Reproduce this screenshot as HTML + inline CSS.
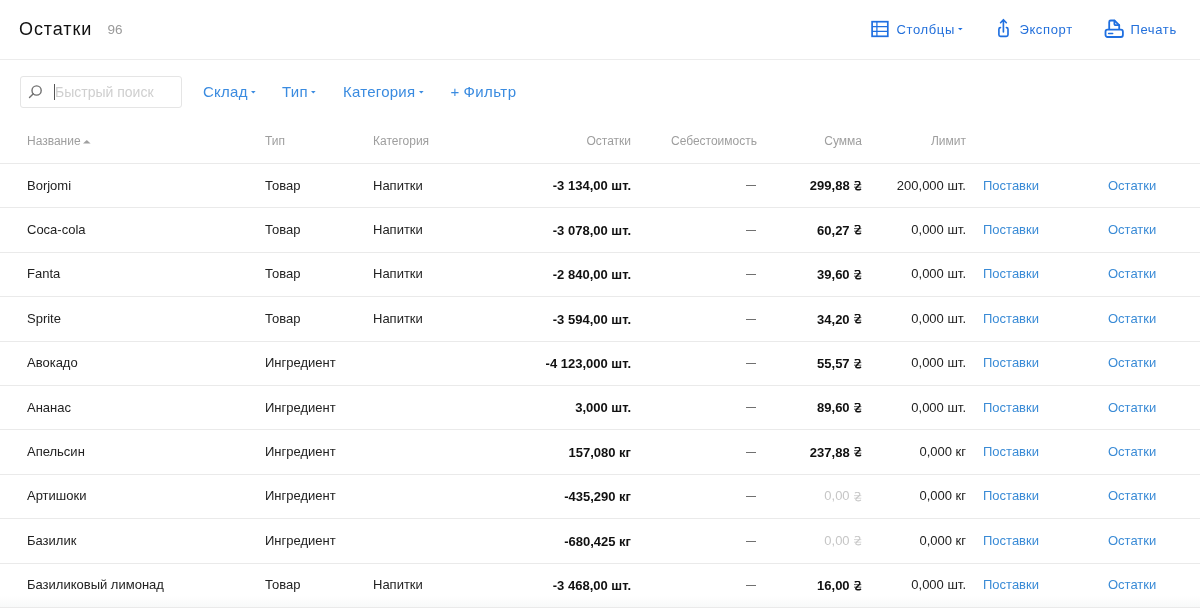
<!DOCTYPE html>
<html><head><meta charset="utf-8"><style>
*{box-sizing:border-box;margin:0;padding:0}
html,body{will-change:transform;width:1200px;height:608px;overflow:hidden;background:#fff;font-family:"Liberation Sans",sans-serif;color:#222}
.top{position:absolute;left:0;top:0;width:1200px;height:60px;border-bottom:1px solid #ececec}
.title{position:absolute;left:19px;top:18.5px;font-size:18px;color:#111;letter-spacing:0.9px}
.count{position:absolute;left:107.6px;top:21.6px;font-size:13.5px;color:#9a9a9a}
.act{position:absolute;top:21.6px;font-size:13px;color:#2370db;letter-spacing:0.65px;white-space:nowrap}
.search{position:absolute;left:20px;top:76px;width:162px;height:32px;border:1px solid #e5e5e5;border-radius:3px}
.search .ph{position:absolute;left:34px;top:7px;font-size:14px;color:#cfcfcf}
.search .cur{position:absolute;left:33px;top:7px;width:1.3px;height:15.5px;background:#555}
.flt{position:absolute;top:82.6px;font-size:15px;color:#3a8be0;letter-spacing:0.25px}
.cr{position:absolute}
.th{position:absolute;top:134px;font-size:12px;color:#9e9e9e;white-space:nowrap}
.hline{position:absolute;left:0;width:1200px;height:1px;background:#eaeaea}
.c{position:absolute;font-size:13px;color:#222;white-space:nowrap}
.r{text-align:right}
.dash{position:absolute;left:746.2px;width:9.6px;height:1.25px;background:#707070}
.b{font-weight:bold;color:#111}
.lnk{color:#3a8bd6}
.mut{color:#c6c6c6}
</style></head><body>
<div class="top"></div>
<div class="title">Остатки</div>
<div class="count">96</div>
<svg width="30" height="27" viewBox="0 0 30 27" style="position:absolute;left:866px;top:15px" fill="none" stroke="#1f6fe0"><rect x="6.1" y="6.7" width="15.7" height="14.6" stroke-width="1.7"/><path d="M6.1 11.5H21.8M6.1 16.4H21.8M10.9 6.7V21.3" stroke-width="1.25"/></svg>
<div class="act" style="left:896.4px">Столбцы</div>
<svg class="cr" width="5" height="3" viewBox="0 0 5 3" style="left:957.6px;top:27.8px"><path d="M0 0H4.6L2.3 2.3Z" fill="#1f6fe0"/></svg>
<svg width="30" height="27" viewBox="0 0 30 27" style="position:absolute;left:990px;top:15px" fill="none" stroke="#1f6fe0" stroke-width="1.65" stroke-linecap="round" stroke-linejoin="round"><path d="M10.5 12.6a1.6 1.6 0 0 0-1.6 1.6V19.7a1.6 1.6 0 0 0 1.6 1.6H16.4a1.6 1.6 0 0 0 1.6-1.6V14.2a1.6 1.6 0 0 0-1.6-1.6"/><path d="M13.4 16.9V4.8M10.6 7.7L13.4 4.7L16.3 7.7"/></svg>
<div class="act" style="left:1019.4px">Экспорт</div>
<svg width="30" height="27" viewBox="0 0 30 27" style="position:absolute;left:1100px;top:15px" fill="none" stroke="#1f6fe0" stroke-width="1.8" stroke-linecap="round" stroke-linejoin="round"><path d="M9.2 14.2V7a1.5 1.5 0 0 1 1.5-1.5H14.4L19.2 10.2V14.2"/><path d="M14.4 5.6V9a1.2 1.2 0 0 0 1.2 1.2H19.2"/><rect x="5.5" y="14.7" width="17.4" height="7.3" rx="2"/><path d="M8.6 18.4H12.7" stroke-width="1.5"/></svg>
<div class="act" style="left:1130.4px">Печать</div>
<div class="search">
  <svg width="16" height="16" viewBox="0 0 16 16" style="position:absolute;left:6px;top:7px" fill="none" stroke="#707070" stroke-width="1.4"><circle cx="9.6" cy="6.5" r="4.6"/><line x1="6.3" y1="9.8" x2="2.5" y2="13.6" stroke-linecap="round"/></svg>
  <div class="ph">Быстрый поиск</div>
  <div class="cur"></div>
</div>
<div class="flt" style="left:203px">Склад</div>
<svg class="cr" width="5" height="3" viewBox="0 0 5 3" style="left:250.5px;top:90.9px"><path d="M0 0H4.6L2.3 2.4Z" fill="#3a8be0"/></svg>
<div class="flt" style="left:282px">Тип</div>
<svg class="cr" width="5" height="3" viewBox="0 0 5 3" style="left:310.6px;top:91.0px"><path d="M0 0H4.6L2.3 2.4Z" fill="#3a8be0"/></svg>
<div class="flt" style="left:343px">Категория</div>
<svg class="cr" width="5" height="3" viewBox="0 0 5 3" style="left:419.4px;top:90.9px"><path d="M0 0H4.6L2.3 2.4Z" fill="#3a8be0"/></svg>
<div class="flt" style="left:450.6px">+</div><div class="flt" style="left:463.4px;letter-spacing:0.45px">Фильтр</div>
<div class="th" style="left:27px">Название</div>
<svg class="cr" width="8" height="4" viewBox="0 0 8 4" style="left:83.2px;top:139.6px"><path d="M0 3.6H7.6L3.8 0Z" fill="#a0a0a0"/></svg>
<div class="th" style="left:265px">Тип</div>
<div class="th" style="left:373px">Категория</div>
<div class="th r" style="right:569px">Остатки</div>
<div class="th r" style="right:443px">Себестоимость</div>
<div class="th r" style="right:338px">Сумма</div>
<div class="th r" style="right:234px">Лимит</div>
<div style="position:absolute;left:0;top:596px;width:1200px;height:11px;background:linear-gradient(#fff,#f8f9f9)"></div><div class="hline" style="top:163.00px"></div>
<div class="hline" style="top:207.40px"></div>
<div class="hline" style="top:251.80px"></div>
<div class="hline" style="top:296.20px"></div>
<div class="hline" style="top:340.60px"></div>
<div class="hline" style="top:385.00px"></div>
<div class="hline" style="top:429.40px"></div>
<div class="hline" style="top:473.80px"></div>
<div class="hline" style="top:518.20px"></div>
<div class="hline" style="top:562.60px"></div>
<div class="hline" style="top:607.00px"></div>
<div class="c" style="left:27px;top:177.60px">Borjomi</div>
<div class="c" style="left:265px;top:177.60px">Товар</div>
<div class="c" style="left:373px;top:177.60px">Напитки</div>
<div class="c r b" style="right:569px;top:178.30px">-3 134,00 шт.</div>
<div class="dash" style="top:185px"></div>
<div class="c r b" style="right:350.4px;top:178.30px">299,88</div>
<svg class="cr" width="8" height="10" viewBox="0 0 8 10" style="left:853.8px;top:181.00px" fill="none" stroke="#111" stroke-linecap="round"><path d="M1.3 0.9C2.8-0.2 5.9 0.1 5.9 2.3C5.9 4.4 1.8 5.6 1.8 7.5C1.8 9 4.5 9.2 6.6 8.2" stroke-width="1.5"/><path d="M0.3 3.6H6.9M0.3 6.2H6.9" stroke-width="1" stroke-opacity="0.7"/></svg>
<div class="c r" style="right:234px;top:177.60px">200,000 шт.</div>
<div class="c lnk" style="left:983px;top:177.60px">Поставки</div>
<div class="c lnk" style="left:1108px;top:177.60px">Остатки</div>
<div class="c" style="left:27px;top:222.00px">Coca-cola</div>
<div class="c" style="left:265px;top:222.00px">Товар</div>
<div class="c" style="left:373px;top:222.00px">Напитки</div>
<div class="c r b" style="right:569px;top:222.70px">-3 078,00 шт.</div>
<div class="dash" style="top:230px"></div>
<div class="c r b" style="right:350.4px;top:222.70px">60,27</div>
<svg class="cr" width="8" height="10" viewBox="0 0 8 10" style="left:853.8px;top:225.40px" fill="none" stroke="#111" stroke-linecap="round"><path d="M1.3 0.9C2.8-0.2 5.9 0.1 5.9 2.3C5.9 4.4 1.8 5.6 1.8 7.5C1.8 9 4.5 9.2 6.6 8.2" stroke-width="1.5"/><path d="M0.3 3.6H6.9M0.3 6.2H6.9" stroke-width="1" stroke-opacity="0.7"/></svg>
<div class="c r" style="right:234px;top:222.00px">0,000 шт.</div>
<div class="c lnk" style="left:983px;top:222.00px">Поставки</div>
<div class="c lnk" style="left:1108px;top:222.00px">Остатки</div>
<div class="c" style="left:27px;top:266.40px">Fanta</div>
<div class="c" style="left:265px;top:266.40px">Товар</div>
<div class="c" style="left:373px;top:266.40px">Напитки</div>
<div class="c r b" style="right:569px;top:267.10px">-2 840,00 шт.</div>
<div class="dash" style="top:274px"></div>
<div class="c r b" style="right:350.4px;top:267.10px">39,60</div>
<svg class="cr" width="8" height="10" viewBox="0 0 8 10" style="left:853.8px;top:269.80px" fill="none" stroke="#111" stroke-linecap="round"><path d="M1.3 0.9C2.8-0.2 5.9 0.1 5.9 2.3C5.9 4.4 1.8 5.6 1.8 7.5C1.8 9 4.5 9.2 6.6 8.2" stroke-width="1.5"/><path d="M0.3 3.6H6.9M0.3 6.2H6.9" stroke-width="1" stroke-opacity="0.7"/></svg>
<div class="c r" style="right:234px;top:266.40px">0,000 шт.</div>
<div class="c lnk" style="left:983px;top:266.40px">Поставки</div>
<div class="c lnk" style="left:1108px;top:266.40px">Остатки</div>
<div class="c" style="left:27px;top:310.80px">Sprite</div>
<div class="c" style="left:265px;top:310.80px">Товар</div>
<div class="c" style="left:373px;top:310.80px">Напитки</div>
<div class="c r b" style="right:569px;top:311.50px">-3 594,00 шт.</div>
<div class="dash" style="top:319px"></div>
<div class="c r b" style="right:350.4px;top:311.50px">34,20</div>
<svg class="cr" width="8" height="10" viewBox="0 0 8 10" style="left:853.8px;top:314.20px" fill="none" stroke="#111" stroke-linecap="round"><path d="M1.3 0.9C2.8-0.2 5.9 0.1 5.9 2.3C5.9 4.4 1.8 5.6 1.8 7.5C1.8 9 4.5 9.2 6.6 8.2" stroke-width="1.5"/><path d="M0.3 3.6H6.9M0.3 6.2H6.9" stroke-width="1" stroke-opacity="0.7"/></svg>
<div class="c r" style="right:234px;top:310.80px">0,000 шт.</div>
<div class="c lnk" style="left:983px;top:310.80px">Поставки</div>
<div class="c lnk" style="left:1108px;top:310.80px">Остатки</div>
<div class="c" style="left:27px;top:355.20px">Авокадо</div>
<div class="c" style="left:265px;top:355.20px">Ингредиент</div>
<div class="c r b" style="right:569px;top:355.90px">-4 123,000 шт.</div>
<div class="dash" style="top:363px"></div>
<div class="c r b" style="right:350.4px;top:355.90px">55,57</div>
<svg class="cr" width="8" height="10" viewBox="0 0 8 10" style="left:853.8px;top:358.60px" fill="none" stroke="#111" stroke-linecap="round"><path d="M1.3 0.9C2.8-0.2 5.9 0.1 5.9 2.3C5.9 4.4 1.8 5.6 1.8 7.5C1.8 9 4.5 9.2 6.6 8.2" stroke-width="1.5"/><path d="M0.3 3.6H6.9M0.3 6.2H6.9" stroke-width="1" stroke-opacity="0.7"/></svg>
<div class="c r" style="right:234px;top:355.20px">0,000 шт.</div>
<div class="c lnk" style="left:983px;top:355.20px">Поставки</div>
<div class="c lnk" style="left:1108px;top:355.20px">Остатки</div>
<div class="c" style="left:27px;top:399.60px">Ананас</div>
<div class="c" style="left:265px;top:399.60px">Ингредиент</div>
<div class="c r b" style="right:569px;top:400.30px">3,000 шт.</div>
<div class="dash" style="top:407px"></div>
<div class="c r b" style="right:350.4px;top:400.30px">89,60</div>
<svg class="cr" width="8" height="10" viewBox="0 0 8 10" style="left:853.8px;top:403.00px" fill="none" stroke="#111" stroke-linecap="round"><path d="M1.3 0.9C2.8-0.2 5.9 0.1 5.9 2.3C5.9 4.4 1.8 5.6 1.8 7.5C1.8 9 4.5 9.2 6.6 8.2" stroke-width="1.5"/><path d="M0.3 3.6H6.9M0.3 6.2H6.9" stroke-width="1" stroke-opacity="0.7"/></svg>
<div class="c r" style="right:234px;top:399.60px">0,000 шт.</div>
<div class="c lnk" style="left:983px;top:399.60px">Поставки</div>
<div class="c lnk" style="left:1108px;top:399.60px">Остатки</div>
<div class="c" style="left:27px;top:444.00px">Апельсин</div>
<div class="c" style="left:265px;top:444.00px">Ингредиент</div>
<div class="c r b" style="right:569px;top:444.70px">157,080 кг</div>
<div class="dash" style="top:452px"></div>
<div class="c r b" style="right:350.4px;top:444.70px">237,88</div>
<svg class="cr" width="8" height="10" viewBox="0 0 8 10" style="left:853.8px;top:447.40px" fill="none" stroke="#111" stroke-linecap="round"><path d="M1.3 0.9C2.8-0.2 5.9 0.1 5.9 2.3C5.9 4.4 1.8 5.6 1.8 7.5C1.8 9 4.5 9.2 6.6 8.2" stroke-width="1.5"/><path d="M0.3 3.6H6.9M0.3 6.2H6.9" stroke-width="1" stroke-opacity="0.7"/></svg>
<div class="c r" style="right:234px;top:444.00px">0,000 кг</div>
<div class="c lnk" style="left:983px;top:444.00px">Поставки</div>
<div class="c lnk" style="left:1108px;top:444.00px">Остатки</div>
<div class="c" style="left:27px;top:488.40px">Артишоки</div>
<div class="c" style="left:265px;top:488.40px">Ингредиент</div>
<div class="c r b" style="right:569px;top:489.10px">-435,290 кг</div>
<div class="dash" style="top:496px"></div>
<div class="c r mut" style="right:350.4px;top:488.40px">0,00</div>
<svg class="cr" width="8" height="10" viewBox="0 0 8 10" style="left:853.8px;top:491.80px" fill="none" stroke="#c8c8c8" stroke-linecap="round"><path d="M1.3 0.9C2.8-0.2 5.9 0.1 5.9 2.3C5.9 4.4 1.8 5.6 1.8 7.5C1.8 9 4.5 9.2 6.6 8.2" stroke-width="1.15"/><path d="M0.3 3.6H6.9M0.3 6.2H6.9" stroke-width="1" stroke-opacity="0.7"/></svg>
<div class="c r" style="right:234px;top:488.40px">0,000 кг</div>
<div class="c lnk" style="left:983px;top:488.40px">Поставки</div>
<div class="c lnk" style="left:1108px;top:488.40px">Остатки</div>
<div class="c" style="left:27px;top:532.80px">Базилик</div>
<div class="c" style="left:265px;top:532.80px">Ингредиент</div>
<div class="c r b" style="right:569px;top:533.50px">-680,425 кг</div>
<div class="dash" style="top:541px"></div>
<div class="c r mut" style="right:350.4px;top:532.80px">0,00</div>
<svg class="cr" width="8" height="10" viewBox="0 0 8 10" style="left:853.8px;top:536.20px" fill="none" stroke="#c8c8c8" stroke-linecap="round"><path d="M1.3 0.9C2.8-0.2 5.9 0.1 5.9 2.3C5.9 4.4 1.8 5.6 1.8 7.5C1.8 9 4.5 9.2 6.6 8.2" stroke-width="1.15"/><path d="M0.3 3.6H6.9M0.3 6.2H6.9" stroke-width="1" stroke-opacity="0.7"/></svg>
<div class="c r" style="right:234px;top:532.80px">0,000 кг</div>
<div class="c lnk" style="left:983px;top:532.80px">Поставки</div>
<div class="c lnk" style="left:1108px;top:532.80px">Остатки</div>
<div class="c" style="left:27px;top:577.20px">Базиликовый лимонад</div>
<div class="c" style="left:265px;top:577.20px">Товар</div>
<div class="c" style="left:373px;top:577.20px">Напитки</div>
<div class="c r b" style="right:569px;top:577.90px">-3 468,00 шт.</div>
<div class="dash" style="top:585px"></div>
<div class="c r b" style="right:350.4px;top:577.90px">16,00</div>
<svg class="cr" width="8" height="10" viewBox="0 0 8 10" style="left:853.8px;top:580.60px" fill="none" stroke="#111" stroke-linecap="round"><path d="M1.3 0.9C2.8-0.2 5.9 0.1 5.9 2.3C5.9 4.4 1.8 5.6 1.8 7.5C1.8 9 4.5 9.2 6.6 8.2" stroke-width="1.5"/><path d="M0.3 3.6H6.9M0.3 6.2H6.9" stroke-width="1" stroke-opacity="0.7"/></svg>
<div class="c r" style="right:234px;top:577.20px">0,000 шт.</div>
<div class="c lnk" style="left:983px;top:577.20px">Поставки</div>
<div class="c lnk" style="left:1108px;top:577.20px">Остатки</div>
</body></html>
